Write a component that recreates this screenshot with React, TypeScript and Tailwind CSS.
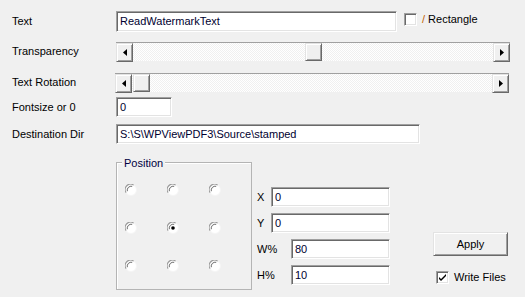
import type { ReactNode } from 'react'

const sunken =
  'border border-t-[#a0a0a0] border-l-[#a0a0a0] border-b-white border-r-white shadow-[inset_1px_1px_0_#696969,inset_-1px_-1px_0_#e3e3e3]'
const raised =
  'border border-t-[#e3e3e3] border-l-[#e3e3e3] border-b-[#696969] border-r-[#696969] shadow-[inset_1px_1px_0_#ffffff,inset_-1px_-1px_0_#a0a0a0] bg-[#f0f0f0]'

function Field({ value, className = '' }: { value: string; className?: string }) {
  return (
    <div className={`flex items-center bg-white pl-[3px] text-[11px] text-[#000030] ${sunken} ${className}`}>
      {value}
    </div>
  )
}

function Check({ checked = false }: { checked?: boolean }) {
  return (
    <div className={`flex h-[13px] w-[13px] items-center justify-center bg-white ${sunken}`}>
      {checked && (
        <svg width="7" height="7" viewBox="0 0 7 7">
          <path d="M0 3 L2 5 L7 0 L7 2 L2 7 L0 5 Z" fill="#000" />
        </svg>
      )}
    </div>
  )
}

function Arrow({ dir }: { dir: 'left' | 'right' }) {
  return (
    <div className={`flex h-[19px] w-[17px] shrink-0 items-center justify-center ${raised}`}>
      <svg width="4" height="7" viewBox="0 0 4 7">
        <path d={dir === 'left' ? 'M4 0 L0 3.5 L4 7 Z' : 'M0 0 L4 3.5 L0 7 Z'} fill="#000" />
      </svg>
    </div>
  )
}

function Scroll({ thumbLeft }: { thumbLeft: number }) {
  return (
    <div className="flex h-[19px] w-[394px] border-t border-t-[#a0a0a0] bg-[repeating-conic-gradient(#f0f0f0_0_25%,#ffffff_0_50%)] bg-[length:2px_2px]">
      <Arrow dir="left" />
      <div className="relative flex-1">
        <div className={`absolute top-0 h-[18px] w-[17px] ${raised}`} style={{ left: thumbLeft }} />
      </div>
      <Arrow dir="right" />
    </div>
  )
}

function Radio({ on = false }: { on?: boolean }) {
  return (
    <svg width="12" height="12" viewBox="0 0 12 12">
      <circle cx="6" cy="6" r="5.5" fill="#ffffff" stroke="#f4f4f4" />
      <path d="M1.1 8.6 A5.4 5.4 0 0 1 8.6 1.1" fill="none" stroke="#9a9a9a" strokeWidth="1.1" />
      <path d="M2.3 7.2 A4.1 4.1 0 0 1 7.2 2.3" fill="none" stroke="#5a5a5a" strokeWidth="0.9" />
      {on && <circle cx="6" cy="6" r="1.8" fill="#000" />}
    </svg>
  )
}

function Row({ label, children, className = '' }: { label: string; children: ReactNode; className?: string }) {
  return (
    <div className={`flex items-center ${className}`}>
      <div className="w-[104px] shrink-0">{label}</div>
      {children}
    </div>
  )
}

export default function App() {
  return (
    <div className="h-[297px] w-[525px] overflow-hidden bg-[#f0f0f0] pl-[12px] pt-[11px] font-['Liberation_Sans',Arial,sans-serif] text-[11px] text-black">
      <Row label="Text" className="h-[21px]">
        <Field value="ReadWatermarkText" className="h-[21px] w-[281px]" />
        <div className="ml-[7px] mb-[4px]">
          <Check />
        </div>
        <span className="ml-[5px] mb-[4px]">
          <span className="text-[#c06000]">/</span> Rectangle
        </span>
      </Row>

      <Row label="Transparency" className="mt-[10px]">
        <Scroll thumbLeft={172} />
      </Row>

      <Row label="Text Rotation" className="mt-[12px]">
        <div className="-ml-px">
          <Scroll thumbLeft={1} />
        </div>
      </Row>

      <Row label="Fontsize or 0" className="mt-[5px]">
        <Field value="0" className="h-[20px] w-[56px]" />
      </Row>

      <Row label="Destination Dir" className="mt-[7px]">
        <Field value="S:\S\WPViewPDF3\Source\stamped" className="h-[20px] w-[304px]" />
      </Row>

      <div className="ml-[104px] mt-[18px] flex">
        <div className="relative h-[128px] w-[136px] border border-[#b4b4b4] shadow-[inset_1px_1px_0_#ffffff]">
          <span className="absolute -top-[8px] left-[5px] bg-[#f0f0f0] px-[2px] text-[#000040]">Position</span>
          <div className="ml-[8px] mt-[21px] grid grid-cols-[42px_42px_42px] grid-rows-[38px_38px_38px]">
            <Radio />
            <Radio />
            <Radio />
            <Radio />
            <Radio on />
            <Radio />
            <Radio />
            <Radio />
            <Radio />
          </div>
        </div>

        <div className="ml-[5px] mt-[25px] flex flex-col gap-[6px]">
          <div className="flex h-[20px] items-center">
            <span className="w-[14px]">X</span>
            <Field value="0" className="h-[20px] w-[119px]" />
          </div>
          <div className="flex h-[20px] items-center">
            <span className="w-[14px]">Y</span>
            <Field value="0" className="h-[20px] w-[119px]" />
          </div>
          <div className="flex h-[20px] items-center">
            <span className="w-[34px]">W%</span>
            <Field value="80" className="h-[20px] w-[99px]" />
          </div>
          <div className="flex h-[20px] items-center">
            <span className="w-[34px]">H%</span>
            <Field value="10" className="h-[20px] w-[99px]" />
          </div>
        </div>

        <div className="ml-[43px] mt-[70px] flex flex-col">
          <div className={`flex h-[24px] w-[75px] items-center justify-center ${raised}`}>Apply</div>
          <div className="ml-[3px] mt-[13px] flex items-center gap-[5px]">
            <Check checked />
            <span>Write Files</span>
          </div>
        </div>
      </div>
    </div>
  )
}
